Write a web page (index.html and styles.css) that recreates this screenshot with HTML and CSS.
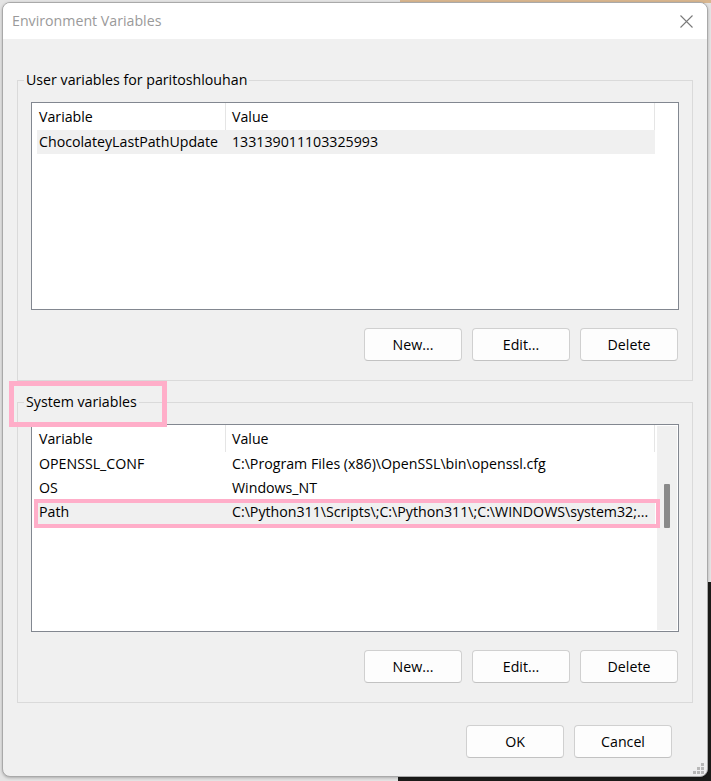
FILE: index.html
```html
<!DOCTYPE html>
<html>
<head>
<meta charset="utf-8">
<title>Environment Variables</title>
<link rel="stylesheet" href="styles.css">
</head>
<body>
<div class="desktop">
  <div class="bg-tan"></div>
  <div class="bg-dark"></div>
  <div class="window">
    <div class="titlebar">
      <span class="title">Environment Variables</span>
      <svg class="close" width="13" height="13" viewBox="0 0 13 13"><path d="M0.5 0.5L12.5 12.5M12.5 0.5L0.5 12.5" stroke="#7a7a7a" stroke-width="1.1" fill="none"/></svg>
    </div>
    <div class="content">
      <fieldset class="group">
        <legend>User variables for paritoshlouhan</legend>
        <div class="list">
          <div class="list-body">
            <div class="row head"><span>Variable</span><span>Value</span></div>
            <div class="row sel"><span>ChocolateyLastPathUpdate</span><span>133139011103325993</span></div>
          </div>
          <div class="scroll none"></div>
        </div>
        <div class="btns">
          <button class="btn">New...</button>
          <button class="btn">Edit...</button>
          <button class="btn">Delete</button>
        </div>
      </fieldset>
      <fieldset class="group">
        <legend>System variables</legend>
        <div class="list">
          <div class="list-body">
            <div class="row head"><span>Variable</span><span>Value</span></div>
            <div class="row"><span>OPENSSL_CONF</span><span>C:\Program Files (x86)\OpenSSL\bin\openssl.cfg</span></div>
            <div class="row"><span>OS</span><span>Windows_NT</span></div>
            <div class="row sel mark"><span>Path</span><span>C:\Python311\Scripts\;C:\Python311\;C:\WINDOWS\system32;...</span></div>
          </div>
          <div class="scroll"><div class="thumb"></div></div>
        </div>
        <div class="btns">
          <button class="btn">New...</button>
          <button class="btn">Edit...</button>
          <button class="btn">Delete</button>
        </div>
      </fieldset>
      <div class="dialog-btns">
        <button class="btn">OK</button>
        <button class="btn">Cancel</button>
      </div>
    </div>
    <div class="annot"></div>
    <svg class="grip" width="11" height="11" viewBox="0 0 11 11">
      <rect x="8" y="0" width="3" height="3" fill="#b8b8b8"/>
      <rect x="4" y="4" width="3" height="3" fill="#b8b8b8"/>
      <rect x="8" y="4" width="3" height="3" fill="#b8b8b8"/>
      <rect x="0" y="8" width="3" height="3" fill="#b8b8b8"/>
      <rect x="4" y="8" width="3" height="3" fill="#b8b8b8"/>
      <rect x="8" y="8" width="3" height="3" fill="#b8b8b8"/>
    </svg>
  </div>
</div>
</body>
</html>
```

FILE: styles.css
```css
* { box-sizing: border-box; }

body {
  margin: 0;
  background: #e4e4e4;
  font-family: "Open Sans", "Noto Sans", sans-serif;
  font-size: 14.2px;
  color: #000;
}

.desktop {
  position: relative;
  width: 711px;
  height: 781px;
  overflow: hidden;
  padding: 2px 0 0 2px;
}

.bg-tan {
  position: absolute;
  left: 400px;
  top: 0;
  width: 311px;
  height: 3px;
  background: #d8b68f;
}

.bg-dark {
  position: absolute;
  left: 398px;
  top: 582px;
  width: 313px;
  height: 199px;
  background: #1c1c1a;
}

.window {
  position: relative;
  width: 706px;
  height: 775px;
  border: 1px solid #a9a9a9;
  border-radius: 8px;
  background: #f0f0f0;
  overflow: hidden;
  box-shadow: 0 1px 3px rgba(0, 0, 0, 0.25);
}

.titlebar {
  height: 36px;
  background: #fff;
  display: flex;
  align-items: center;
  justify-content: space-between;
  padding: 0 14px 0 9px;
}

.title {
  color: #9a9a9a;
  line-height: 20px;
}

.close { display: block; }

.content {
  padding: 31px 14px 0;
}

.group {
  margin: 0;
  border: 1px solid #dadada;
  padding: 12px 13px 19px;
  min-width: 0;
}

.group + .group { margin-top: 11px; }

legend {
  padding: 0 2px;
  margin-left: -7px;
  line-height: 20px;
}

.list {
  height: 208px;
  border: 1px solid #828790;
  background: #fff;
  display: flex;
  padding-right: 1px;
}

.list-body {
  flex: 1;
  margin-left: 5px;
}

.scroll {
  width: 20px;
  margin: 1px 0 1px 2px;
  background: #f0f0f0;
  padding-top: 58px;
  display: flex;
  justify-content: center;
  align-items: flex-start;
}

.scroll.none { background: transparent; }

.thumb {
  width: 6px;
  height: 44px;
  background: #8a8a8a;
  border-radius: 1px;
}

.row {
  display: grid;
  grid-template-columns: 189px 1fr;
  height: 24px;
  line-height: 24px;
  white-space: nowrap;
}

.row > span:first-child { padding-left: 2px; }
.row > span:last-child { padding-left: 6px; overflow: hidden; }

.head {
  height: 27px;
  line-height: 27px;
  border-right: 1px solid #e5e5e5;
}

.head > span:first-child { border-right: 1px solid #e5e5e5; }
.head > span:last-child { padding-left: 6px; }

.sel {
  background: #f0f0f0;
  position: relative;
}

.mark::after {
  content: "";
  position: absolute;
  left: -3px;
  right: -5px;
  top: -1px;
  bottom: -4px;
  border: 4px solid #ffaec9;
}

.btns {
  display: flex;
  justify-content: flex-end;
  gap: 10px;
  margin-top: 18px;
  padding-right: 1px;
}

.btn {
  width: 98px;
  height: 33px;
  border: 1px solid #d0d0d0;
  border-bottom-color: #c2c2c2;
  border-radius: 4px;
  background: #fdfdfd;
  font: inherit;
  color: #000;
  padding: 0;
}

.dialog-btns {
  display: flex;
  justify-content: flex-end;
  gap: 10px;
  margin-top: 22px;
  padding-right: 21px;
}

.annot {
  position: absolute;
  left: 6px;
  top: 378px;
  width: 158px;
  height: 46px;
  border: 5px solid #ffaec9;
}

.grip {
  position: absolute;
  right: 3px;
  bottom: 2px;
}
```
